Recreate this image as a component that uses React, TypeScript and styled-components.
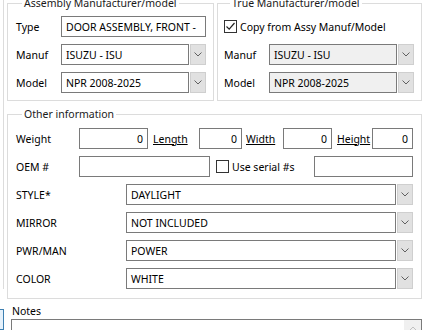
import styled, { createGlobalStyle } from 'styled-components';

const GlobalStyle = createGlobalStyle`
  body {
    margin: 0;
    background: #fff;
    font-family: "Noto Sans", "Open Sans", sans-serif;
    font-size: 10.5px;
    color: #000;
  }
`;

const Page = styled.div`
  width: 430px;
  height: 330px;
  overflow: hidden;
  display: flex;
  background: #fff;
`;

const Rail = styled.div`
  width: 4px;
  flex: none;
  display: flex;
  flex-direction: column;
`;

const RailLine = styled.div`
  height: 298px;
  border-right: 1px solid #dcdcdc;
`;

const RailStub = styled.div`
  margin-top: 20px;
  height: 20px;
  border: 1px solid #3c7fb1;
  border-left: none;
  background: #e5f1fb;
`;

const Content = styled.div`
  flex: 1;
  padding: 0 8px 0 3px;
  margin-top: -4px;
  display: flex;
  flex-direction: column;
`;

const TopRow = styled.div`
  display: flex;
  gap: 3px;
`;

const Group = styled.fieldset<{ $pad?: string }>`
  margin: 0;
  min-width: 0;
  flex: 1;
  border: 1px solid #dcdcdc;
  padding: ${(p) => p.$pad || '5px 7px 7px 8px'};
  display: flex;
  flex-direction: column;
  gap: 7px;
`;

const Legend = styled.legend`
  margin-left: 6px;
  padding: 0 2px;
  line-height: 15px;
  color: #1a1a1a;
`;

const Row = styled.div`
  display: flex;
  align-items: center;
  height: 21px;
`;

const Label = styled.span<{ $w?: number; $link?: boolean }>`
  flex: none;
  width: ${(p) => (p.$w ? `${p.$w}px` : 'auto')};
  text-decoration: ${(p) => (p.$link ? 'underline' : 'none')};
  white-space: nowrap;
`;

const Box = styled.div<{ $w?: number; $right?: boolean; $disabled?: boolean }>`
  box-sizing: border-box;
  height: 21px;
  flex: ${(p) => (p.$w ? 'none' : '1')};
  width: ${(p) => (p.$w ? `${p.$w}px` : 'auto')};
  border: 1px solid #7a7a7a;
  background: ${(p) => (p.$disabled ? '#f0f0f0' : '#fff')};
  padding: 0 4px;
  display: flex;
  align-items: center;
  justify-content: ${(p) => (p.$right ? 'flex-end' : 'flex-start')};
  white-space: nowrap;
  overflow: hidden;
`;

const ComboWrap = styled.div`
  flex: 1;
  display: flex;
  height: 21px;
  gap: 1px;
`;

const ComboButton = styled.div`
  box-sizing: border-box;
  width: 16px;
  flex: none;
  background: #e1e1e1;
  border: 1px solid #cfcfcf;
  display: flex;
  align-items: center;
  justify-content: center;
`;

const CheckRow = styled.label`
  display: flex;
  align-items: center;
  gap: 3px;
  height: 21px;
  white-space: nowrap;
`;

const CheckSquare = styled.span`
  box-sizing: border-box;
  width: 13px;
  height: 13px;
  border: 1px solid #333;
  background: #fff;
  display: flex;
  align-items: center;
  justify-content: center;
`;

const Gap = styled.span<{ $w: number }>`
  flex: none;
  width: ${(p) => p.$w}px;
`;

const Notes = styled.div`
  margin-top: 5px;
  padding-left: 4px;
  display: flex;
  flex-direction: column;
`;

const NotesLabel = styled.span`
  padding-left: 1px;
  line-height: 14px;
`;

const NotesBox = styled.div`
  margin-top: 1px;
  height: 30px;
  border: 1px solid #7a7a7a;
  display: flex;
  justify-content: flex-end;
`;

const ScrollBar = styled.div`
  width: 17px;
  background: #f0f0f0;
  display: flex;
  justify-content: center;
  padding-top: 6px;
`;

const Chevron = () => (
  <svg width="8" height="5" viewBox="0 0 8 5">
    <path d="M0.5 0.5 L4 4 L7.5 0.5" fill="none" stroke="#606060" strokeWidth="1" />
  </svg>
);

const Combo = ({ value, disabled }: { value: string; disabled?: boolean }) => (
  <ComboWrap>
    <Box $disabled={disabled}>{value}</Box>
    <ComboButton>
      <Chevron />
    </ComboButton>
  </ComboWrap>
);

const Check = ({ checked, text }: { checked?: boolean; text: string }) => (
  <CheckRow>
    <CheckSquare>
      {checked && (
        <svg width="11" height="11" viewBox="0 0 11 11">
          <path d="M1.5 5.5 L4.2 8.2 L9.5 2" fill="none" stroke="#222" strokeWidth="1.2" />
        </svg>
      )}
    </CheckSquare>
    {text}
  </CheckRow>
);

const attributes = [
  { name: 'STYLE*', value: 'DAYLIGHT' },
  { name: 'MIRROR', value: 'NOT INCLUDED' },
  { name: 'PWR/MAN', value: 'POWER' },
  { name: 'COLOR', value: 'WHITE' },
];

export default function App() {
  return (
    <>
      <GlobalStyle />
      <Page>
        <Rail>
          <RailLine />
          <RailStub />
        </Rail>
        <Content>
          <TopRow>
            <Group>
              <Legend>Assembly Manufacturer/model</Legend>
              <Row>
                <Label $w={45}>Type</Label>
                <Box>DOOR ASSEMBLY, FRONT -</Box>
              </Row>
              <Row>
                <Label $w={45}>Manuf</Label>
                <Combo value="ISUZU - ISU" />
              </Row>
              <Row>
                <Label $w={45}>Model</Label>
                <Combo value="NPR 2008-2025" />
              </Row>
            </Group>
            <Group $pad="5px 7px 7px 6px">
              <Legend>True Manufacturer/model</Legend>
              <Row>
                <Check checked text="Copy from Assy Manuf/Model" />
              </Row>
              <Row>
                <Label $w={45}>Manuf</Label>
                <Combo value="ISUZU - ISU" disabled />
              </Row>
              <Row>
                <Label $w={45}>Model</Label>
                <Combo value="NPR 2008-2025" disabled />
              </Row>
            </Group>
          </TopRow>
          <Group $pad="6px 8px 9px 8px" style={{ marginTop: 6 }}>
            <Legend>Other information</Legend>
            <Row>
              <Label $w={63}>Weight</Label>
              <Box $w={69} $right>0</Box>
              <Gap $w={5} />
              <Label $w={46} $link>Length</Label>
              <Box $w={43} $right>0</Box>
              <Gap $w={4} />
              <Label $w={37} $link>Width</Label>
              <Box $w={49} $right>0</Box>
              <Gap $w={5} />
              <Label $w={35} $link>Height</Label>
              <Box $w={41} $right>0</Box>
            </Row>
            <Row>
              <Label $w={63}>OEM #</Label>
              <Box $w={131} />
              <Gap $w={6} />
              <Check text="Use serial #s" />
              <Box $w={99} style={{ marginLeft: 'auto' }} />
            </Row>
            {attributes.map((a) => (
              <Row key={a.name}>
                <Label $w={110}>{a.name}</Label>
                <Combo value={a.value} />
              </Row>
            ))}
          </Group>
          <Notes>
            <NotesLabel>Notes</NotesLabel>
            <NotesBox>
              <ScrollBar>
                <svg width="8" height="5" viewBox="0 0 8 5">
                  <path d="M0.5 4.5 L4 1 L7.5 4.5" fill="none" stroke="#c0c0c0" strokeWidth="1" />
                </svg>
              </ScrollBar>
            </NotesBox>
          </Notes>
        </Content>
      </Page>
    </>
  );
}
